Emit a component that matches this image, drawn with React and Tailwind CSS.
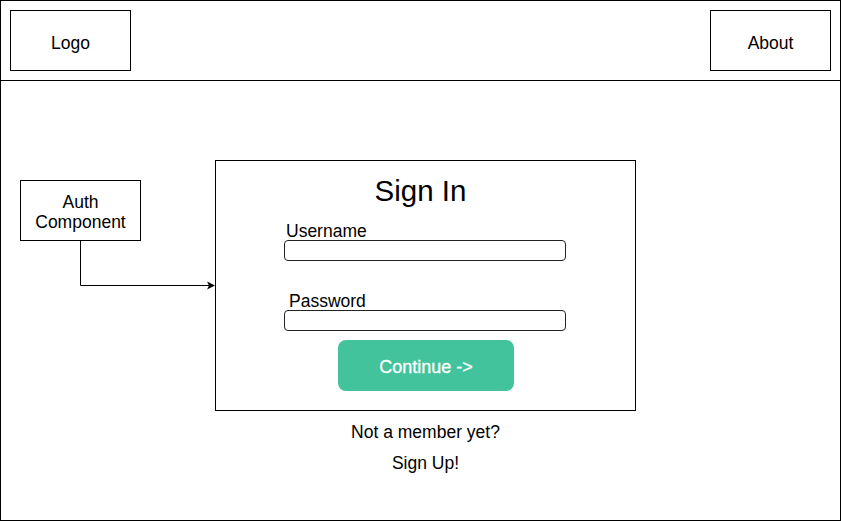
import React from 'react';

const font = { fontFamily: '"Liberation Sans", Arial, sans-serif' };

// arrow from the auth box into the sign in panel
const Connector = () => (
  <svg className="absolute left-0 top-0 pointer-events-none" width="839" height="439">
    <g transform="translate(-1,-81)">
      <path d="M80.5 240 V285.5 H209" fill="none" stroke="#000" strokeWidth="1" />
      <path d="M215 285.5 L207 281.5 L209 285.5 L207 289.5 Z" fill="#000" />
    </g>
  </svg>
);

const Field = ({ label, labelOffset }) => (
  <div className="flex flex-col ml-[68px]">
    <span className={`text-[17.5px] leading-[17px] h-[17px] text-black ${labelOffset}`}>{label}</span>
    <div className="w-[282px] h-[21px] border border-[#222] rounded-[4px] bg-white" />
  </div>
);

export default function App() {
  return (
    <div style={font} className="w-[841px] h-[521px] border border-black bg-white flex flex-col text-black">
      <header className="h-[80px] shrink-0 border-b border-black flex justify-between items-start px-[9px] pt-[9px]">
        <div className="w-[121px] h-[61px] border border-black flex items-center justify-center pt-[5px] text-[17.5px]">
          Logo
        </div>
        <div className="w-[121px] h-[61px] border border-black flex items-center justify-center pt-[5px] text-[17.5px]">
          About
        </div>
      </header>

      <main className="relative flex-1 flex items-start">
        <Connector />
        <div className="ml-[19px] mt-[99px] w-[121px] h-[61px] border border-black flex flex-col items-center justify-center pt-[2px] text-[17.5px] leading-[20px] text-center">
          <span>Auth</span>
          <span>Component</span>
        </div>

        <div className="ml-[74px] mt-[79px] w-[421px] flex flex-col">
          <div className="relative h-[251px] border border-black bg-white flex flex-col">
            <h1 className="mt-[15px] text-[29.5px] leading-[29px] h-[29px] text-center pr-[10px] font-normal">Sign In</h1>
            <div className="mt-[18px]">
              <Field label="Username" labelOffset="ml-[2px]" />
            </div>
            <div className="mt-[32px]">
              <Field label="Password" labelOffset="ml-[5px]" />
            </div>
            <button className="mt-[9px] ml-[122px] w-[176px] h-[51px] rounded-[8px] bg-[#43c39b] text-white text-[18px] leading-none pt-[2px] [-webkit-text-stroke:0.3px_white]">
              Continue -&gt;
            </button>
          </div>
          <p className="mt-[6px] text-[17.5px] leading-[31px] text-center">Not a member yet?</p>
          <p className="text-[17.5px] leading-[31px] text-center">Sign Up!</p>
        </div>
      </main>
    </div>
  );
}
